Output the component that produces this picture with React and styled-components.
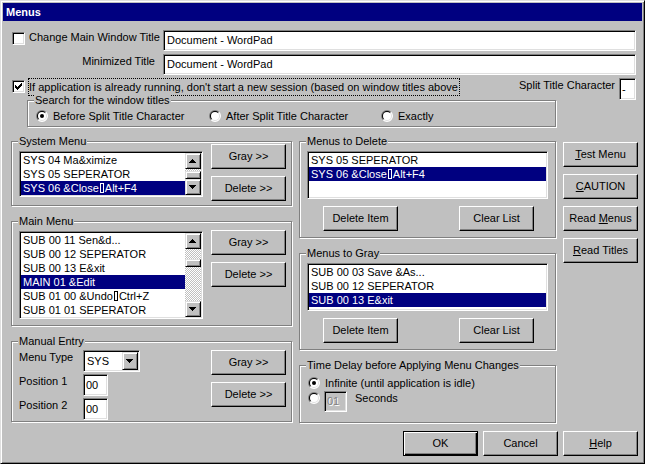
import React from "react";
import styled, { createGlobalStyle, css } from "styled-components";

const GlobalStyle = createGlobalStyle`
  html, body { margin: 0; padding: 0; background: #c0c0c0; }
  body {
    font-family: "Liberation Sans", Arial, sans-serif;
    font-size: 11px;
    color: #000;
  }
  *, *::before, *::after { box-sizing: border-box; }
`;

const FACE = "#c0c0c0";

const raised = css`
  border: 1px solid;
  border-color: #fff #000 #000 #fff;
  box-shadow: inset -1px -1px #808080;
`;

const sunken = css`
  border: 1px solid;
  border-color: #808080 #fff #fff #808080;
  box-shadow: inset 1px 1px #000, inset -1px -1px #dfdfdf;
  padding: 1px;
`;

const Window = styled.div`
  width: 645px;
  height: 464px;
  border: 1px solid;
  border-color: #dfdfdf #000 #000 #dfdfdf;
  box-shadow: inset 1px 1px #fff, inset -1px -1px #808080;
  padding: 2px;
  background: ${FACE};
  display: flex;
  flex-direction: column;
`;

const TitleBar = styled.div`
  height: 18px;
  flex: none;
  background: #000080;
  color: #fff;
  font-weight: bold;
  line-height: 18px;
  padding-left: 3px;
`;

const Body = styled.div`
  flex: 1;
  display: flex;
  flex-direction: column;
  padding: 9px 4px 0 8px;
`;

const TitleGrid = styled.div`
  display: grid;
  grid-template-columns: 144px 1fr;
  column-gap: 8px;
  row-gap: 3px;
  margin-right: 2px;
`;

const CheckLine = styled.div`
  display: flex;
  align-items: flex-start;
`;

const Text = styled.span`
  line-height: 13px;
  white-space: nowrap;
  margin-top: ${(p) => p.$top ?? 0}px;
  margin-left: ${(p) => p.$left ?? 0}px;
`;

const RightLabel = styled(Text)`
  justify-self: end;
`;

const Field = styled.div`
  ${sunken};
  height: ${(p) => p.$h ?? 21}px;
  width: ${(p) => (p.$w ? `${p.$w}px` : "auto")};
  background: ${(p) => (p.$disabled ? FACE : "#fff")};
  color: ${(p) => (p.$disabled ? "#808080" : "#000")};
  text-shadow: ${(p) => (p.$disabled ? "1px 1px #fff" : "none")};
  padding-left: ${(p) => p.$pl ?? 3}px;
  line-height: ${(p) => (p.$h ?? 21) - 4}px;
  white-space: nowrap;
  overflow: hidden;
  flex: none;
`;

const CheckBoxFrame = styled.span`
  ${sunken};
  padding: 0;
  width: 13px;
  height: 13px;
  flex: none;
  background: #fff;
  display: block;
  margin: 2px 0 0 1px;
`;

const CheckBox = ({ checked }) => (
  <CheckBoxFrame>
    {checked && (
      <svg width="11" height="11" viewBox="0 0 11 11" shapeRendering="crispEdges">
        <path
          fill="#000"
          d="M8 2h1v1h-1z M7 3h2v1h-2z M2 4h1v1h-1z M6 4h3v1h-3z M2 5h2v1h-2z M5 5h3v1h-3z M2 6h5v1h-5z M3 7h3v1h-3z M4 8h1v1h-1z"
        />
      </svg>
    )}
  </CheckBoxFrame>
);

const RadioSvg = styled.svg`
  flex: none;
  display: block;
  margin-top: ${(p) => p.$top ?? 0}px;
`;

const Radio = ({ checked, top }) => (
  <RadioSvg width="12" height="12" viewBox="0 0 12 12" $top={top}>
    <path d="M1.757 10.243 A6 6 0 0 1 10.243 1.757 Z" fill="#808080" />
    <path d="M10.243 1.757 A6 6 0 0 1 1.757 10.243 Z" fill="#fff" />
    <path d="M2.464 9.536 A5 5 0 0 1 9.536 2.464 Z" fill="#000" />
    <path d="M9.536 2.464 A5 5 0 0 1 2.464 9.536 Z" fill="#dfdfdf" />
    <circle cx="6" cy="6" r="4" fill="#fff" />
    {checked && <circle cx="6" cy="6" r="2" fill="#000" />}
  </RadioSvg>
);

const SessionRow = styled.div`
  display: flex;
  align-items: flex-start;
  height: 22px;
  margin-top: 3px;
  margin-right: 2px;
`;

const FocusLabel = styled.span`
  border: 1px dotted #000;
  height: 18px;
  line-height: 16px;
  padding: 0 1px 0 0;
  margin-left: 3px;
  white-space: nowrap;
`;

const SplitLabel = styled(Text)`
  margin-left: auto;
  margin-top: 1px;
  margin-right: 4px;
`;

const Group = styled.div`
  position: relative;
  border: 1px solid #808080;
  box-shadow: inset 1px 1px #fff, 1px 1px #fff;
  height: ${(p) => p.$h}px;
  padding: ${(p) => p.$pad};
  margin-left: ${(p) => p.$ml ?? 0}px;
  width: ${(p) => (p.$w ? `${p.$w}px` : "auto")};
  flex: none;
`;

const Caption = styled.span`
  position: absolute;
  top: -7px;
  left: 6px;
  padding: 0 1px;
  line-height: 13px;
  background: ${FACE};
  white-space: nowrap;
`;

const GroupBox = ({ title, children, ...rest }) => (
  <Group {...rest}>
    <Caption>{title}</Caption>
    {children}
  </Group>
);

const RadioGrid = styled.div`
  display: grid;
  grid-template-columns: ${(p) => p.$cols};
`;

const RadioOption = styled.div`
  display: flex;
  align-items: center;
  gap: ${(p) => p.$gap ?? 5}px;
  height: ${(p) => p.$h ?? 12}px;
  white-space: nowrap;
`;

const MainGrid = styled.div`
  display: grid;
  grid-template-columns: 281px 257px 75px;
  column-gap: 7px;
  margin-top: 14px;
`;

const Column = styled.div`
  display: flex;
  flex-direction: column;
  gap: ${(p) => p.$gap}px;
  padding-top: ${(p) => p.$pt ?? 0}px;
`;

const Split = styled.div`
  display: flex;
  align-items: flex-start;
  gap: 8px;
`;

const ButtonStack = styled.div`
  display: flex;
  flex-direction: column;
  gap: 7px;
  flex: none;
`;

const Button = styled.button`
  width: 75px;
  height: 25px;
  padding: 0;
  margin: 0;
  flex: none;
  font-family: "Liberation Sans", Arial, sans-serif;
  font-size: 11px;
  color: #000;
  background: ${FACE};
  border-radius: 0;
  line-height: 13px;
  ${(p) =>
    p.$default
      ? css`
          border: 1px solid #000;
          box-shadow: inset 1px 1px #fff, inset -1px -1px #000, inset -2px -2px #808080;
        `
      : raised}
`;

const ListFrame = styled.div`
  ${sunken};
  width: ${(p) => p.$w}px;
  height: ${(p) => p.$h}px;
  margin-top: ${(p) => p.$top ?? 0}px;
  background: #fff;
  display: flex;
  flex: none;
`;

const Items = styled.div`
  flex: 1;
  overflow: hidden;
`;

const Row = styled.div`
  height: 14px;
  line-height: 14px;
  padding-left: 2px;
  white-space: nowrap;
  background: ${(p) => (p.$sel ? "#000080" : "transparent")};
  color: ${(p) => (p.$sel ? "#fff" : "#000")};
`;

const Tofu = styled.span`
  display: inline-block;
  width: 4px;
  height: 10px;
  border: 1px solid currentColor;
  vertical-align: -1px;
  margin: 0 1px 0 1px;
`;

const SBar = styled.div`
  width: 16px;
  flex: none;
  display: flex;
  flex-direction: column;
`;

const SBtn = styled.div`
  width: 16px;
  height: ${(p) => p.$h ?? 16}px;
  flex: none;
  background: ${FACE};
  border: 1px solid;
  border-color: #dfdfdf #000 #000 #dfdfdf;
  box-shadow: inset 1px 1px #fff, inset -1px -1px #808080;
  display: flex;
  align-items: center;
  justify-content: center;
`;

const Track = styled.div`
  flex: 1;
  background-color: #fff;
  background-image: conic-gradient(#c0c0c0 25%, #fff 0 50%, #c0c0c0 0 75%, #fff 0);
  background-size: 2px 2px;
  display: flex;
  flex-direction: column;
`;

const Thumb = styled(SBtn)`
  height: 8px;
  margin-top: ${(p) => p.$top}px;
`;

const ArrowUp = () => (
  <svg width="14" height="14" viewBox="0 0 14 14" shapeRendering="crispEdges">
    <path fill="#000" d="M6 5h1v1h-1z M5 6h3v1h-3z M4 7h5v1h-5z M3 8h7v1h-7z" />
  </svg>
);

const ArrowDown = () => (
  <svg width="14" height="14" viewBox="0 0 14 14" shapeRendering="crispEdges">
    <path fill="#000" d="M3 5h7v1h-7z M4 6h5v1h-5z M5 7h3v1h-3z M6 8h1v1h-1z" />
  </svg>
);

const ScrollBar = ({ thumbTop }) => (
  <SBar>
    <SBtn>
      <ArrowUp />
    </SBtn>
    <Track>
      <Thumb $top={thumbTop} />
    </Track>
    <SBtn>
      <ArrowDown />
    </SBtn>
  </SBar>
);

const Item = ({ text, selected }) => {
  const [a, b] = text.split("\t");
  return (
    <Row $sel={selected}>
      {a}
      {b !== undefined && (
        <>
          <Tofu />
          {b}
        </>
      )}
    </Row>
  );
};

const ListBox = ({ items, selected, w, h, top, thumbTop }) => (
  <ListFrame $w={w} $h={h} $top={top}>
    <Items>
      {items.map((t, i) => (
        <Item key={i} text={t} selected={i === selected} />
      ))}
    </Items>
    {thumbTop !== undefined && <ScrollBar thumbTop={thumbTop} />}
  </ListFrame>
);

const FormGrid = styled.div`
  display: grid;
  grid-template-columns: 64px auto;
  grid-auto-rows: 22px;
  row-gap: 2px;
  width: 184px;
  flex: none;
  align-items: start;
`;

const Combo = styled.div`
  ${sunken};
  width: 57px;
  height: 22px;
  background: #fff;
  display: flex;
  align-items: stretch;
`;

const ComboText = styled.span`
  flex: 1;
  line-height: 18px;
  padding-left: 2px;
`;

const ButtonRow = styled.div`
  display: flex;
  justify-content: space-between;
  padding: 0 14px 0 16px;
  margin-top: 7px;
`;

const DelayRow = styled.div`
  display: flex;
  align-items: flex-start;
  margin-top: ${(p) => p.$top ?? 0}px;
  height: ${(p) => p.$h}px;
`;

const Footer = styled.div`
  display: flex;
  justify-content: flex-end;
  gap: 5px;
  margin-top: 8px;
`;

const SYSTEM = ["SYS 04 Ma&ximize", "SYS 05 SEPERATOR", "SYS 06 &Close\tAlt+F4"];
const MAIN = [
  "SUB 00 11 Sen&d...",
  "SUB 00 12 SEPERATOR",
  "SUB 00 13 E&xit",
  "MAIN 01 &Edit",
  "SUB 01 00 &Undo\tCtrl+Z",
  "SUB 01 01 SEPERATOR",
];
const TO_DELETE = ["SYS 05 SEPERATOR", "SYS 06 &Close\tAlt+F4"];
const TO_GRAY = ["SUB 00 03 Save &As...", "SUB 00 12 SEPERATOR", "SUB 00 13 E&xit"];

export default function App() {
  return (
    <>
      <GlobalStyle />
      <Window>
        <TitleBar>Menus</TitleBar>
        <Body>
          <TitleGrid>
            <CheckLine>
              <CheckBox />
              <Text $left={4} $top={1}>Change Main Window Title</Text>
            </CheckLine>
            <Field>Document - WordPad</Field>
            <RightLabel $top={1}>Minimized Title</RightLabel>
            <Field>Document - WordPad</Field>
          </TitleGrid>

          <SessionRow>
            <CheckBox checked />
            <FocusLabel>
              If application is already running, don't start a new session (based on window titles above
            </FocusLabel>
            <SplitLabel>Split Title Character</SplitLabel>
            <Field $w={17} $h={22} $pl={2}>-</Field>
          </SessionRow>

          <GroupBox title="Search for the window titles" $w={529} $h={27} $ml={16} $pad="9px 0 0 8px">
            <RadioGrid $cols="173px 172px auto">
              <RadioOption>
                <Radio checked />
                <span>Before Split Title Character</span>
              </RadioOption>
              <RadioOption>
                <Radio />
                <span>After Split Title Character</span>
              </RadioOption>
              <RadioOption>
                <Radio />
                <span>Exactly</span>
              </RadioOption>
            </RadioGrid>
          </GroupBox>

          <MainGrid>
            <Column $gap={15}>
              <GroupBox title="System Menu" $h={65} $pad="2px 5px 0 7px">
                <Split>
                  <ListBox items={SYSTEM} selected={2} w={184} h={46} top={7} thumbTop={2} />
                  <ButtonStack>
                    <Button>Gray &gt;&gt;</Button>
                    <Button>Delete &gt;&gt;</Button>
                  </ButtonStack>
                </Split>
              </GroupBox>

              <GroupBox title="Main Menu" $h={105} $pad="8px 5px 0 7px">
                <Split>
                  <ListBox items={MAIN} selected={3} w={184} h={88} top={1} thumbTop={10} />
                  <ButtonStack>
                    <Button>Gray &gt;&gt;</Button>
                    <Button>Delete &gt;&gt;</Button>
                  </ButtonStack>
                </Split>
              </GroupBox>

              <GroupBox title="Manual Entry" $h={81} $pad="8px 5px 0 7px">
                <Split>
                  <FormGrid>
                    <Text $top={1}>Menu Type</Text>
                    <Combo>
                      <ComboText>SYS</ComboText>
                      <SBtn $h={18}>
                        <ArrowDown />
                      </SBtn>
                    </Combo>
                    <Text $top={1}>Position 1</Text>
                    <Field $w={25} $h={22} $pl={2}>00</Field>
                    <Text $top={1}>Position 2</Text>
                    <Field $w={25} $h={22} $pl={2}>00</Field>
                  </FormGrid>
                  <ButtonStack>
                    <Button>Gray &gt;&gt;</Button>
                    <Button>Delete &gt;&gt;</Button>
                  </ButtonStack>
                </Split>
              </GroupBox>
            </Column>

            <Column $gap={15}>
              <GroupBox title="Menus to Delete" $h={97} $pad="9px 7px 0 7px">
                <ListBox items={TO_DELETE} selected={1} w={241} h={48} />
                <ButtonRow>
                  <Button>Delete Item</Button>
                  <Button>Clear List</Button>
                </ButtonRow>
              </GroupBox>

              <GroupBox title="Menus to Gray" $h={97} $pad="9px 7px 0 7px">
                <ListBox items={TO_GRAY} selected={2} w={241} h={48} />
                <ButtonRow>
                  <Button>Delete Item</Button>
                  <Button>Clear List</Button>
                </ButtonRow>
              </GroupBox>

              <GroupBox title="Time Delay before Applying Menu Changes" $h={58} $pad="10px 7px 0 8px">
                <DelayRow $h={13}>
                  <RadioOption $h={13}>
                    <Radio checked />
                    <span>Infinite (until application is idle)</span>
                  </RadioOption>
                </DelayRow>
                <DelayRow $h={21} $top={2}>
                  <Radio top={1} />
                  <Field $w={23} $h={21} $pl={2} $disabled style={{ marginLeft: 4 }}>
                    01
                  </Field>
                  <Text $left={8} $top={1}>Seconds</Text>
                </DelayRow>
              </GroupBox>
            </Column>

            <Column $gap={7} $pt={1}>
              <Button>
                <u>T</u>est Menu
              </Button>
              <Button>
                <u>C</u>AUTION
              </Button>
              <Button>
                Read <u>M</u>enus
              </Button>
              <Button>
                <u>R</u>ead Titles
              </Button>
            </Column>
          </MainGrid>

          <Footer>
            <Button $default>OK</Button>
            <Button>Cancel</Button>
            <Button>
              <u>H</u>elp
            </Button>
          </Footer>
        </Body>
      </Window>
    </>
  );
}
